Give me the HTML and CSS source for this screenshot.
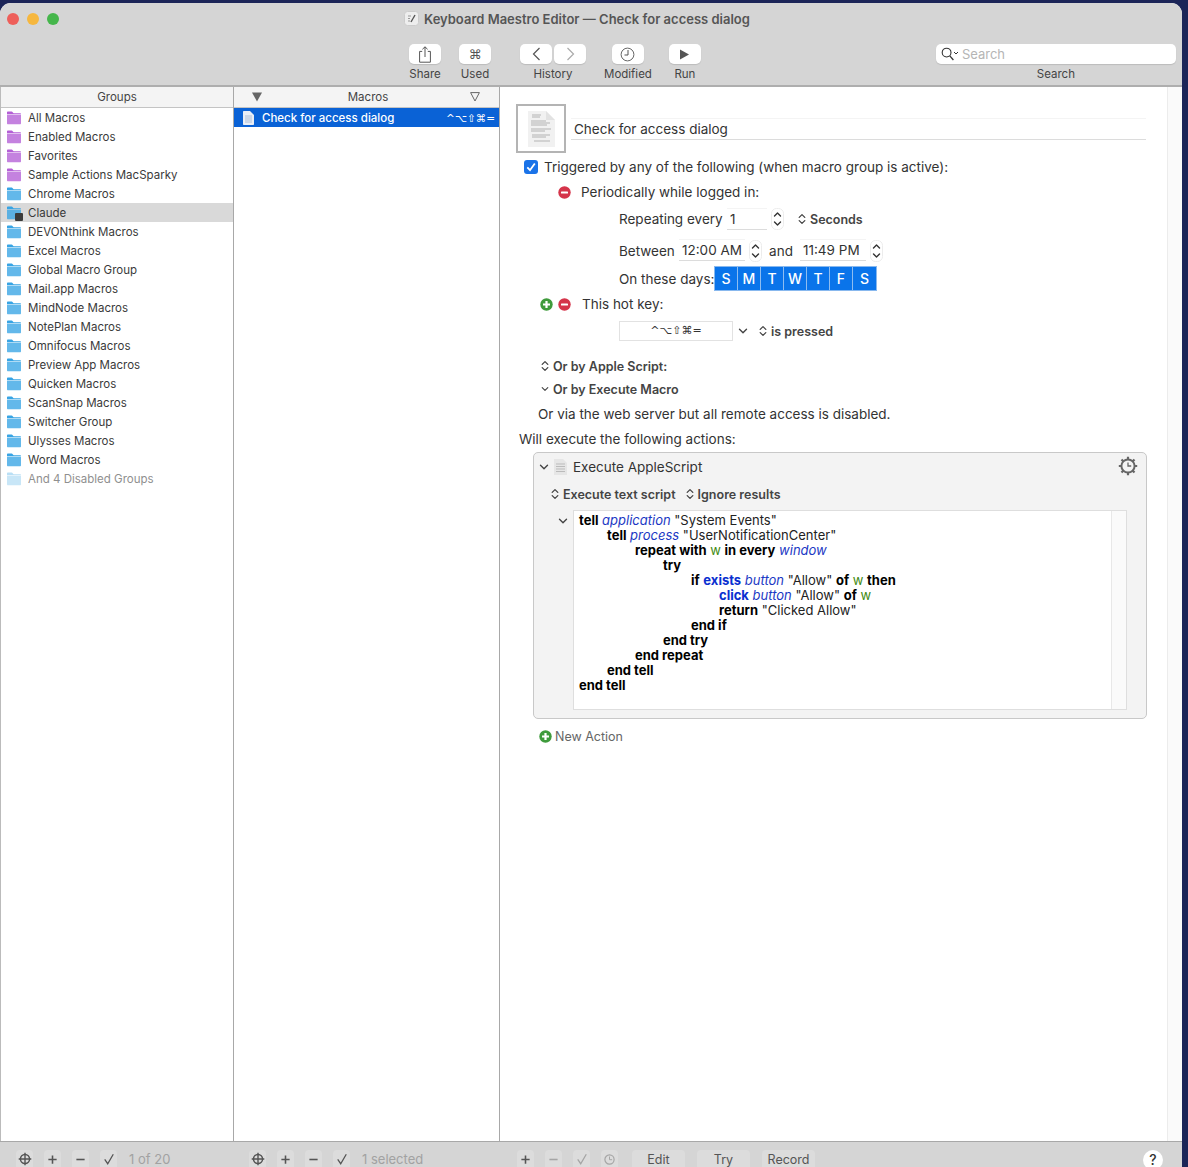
FILE: index.html
```html
<!DOCTYPE html>
<html lang="en">
<head>
    <meta charset="UTF-8">
    <meta name="viewport" content="width=device-width, initial-scale=1.0">
    <title>Keyboard Maestro Editor</title>
    <link rel="stylesheet" href="styles.css">
</head>
<body>
    <svg class="defs" width="0" height="0">
        <symbol id="folder" viewBox="0 0 16 14">
            <path d="M1 3V1.6C1 1 1.4.6 2 .6h3.6c.5 0 .8.2 1.1.6L7.6 2.2H14c.6 0 1 .4 1 1V3z" fill="currentColor"/>
            <path d="M1 3.4h14v8.9c0 .6-.4 1-1 1H2c-.6 0-1-.4-1-1z" fill="currentColor" opacity=".78"/>
        </symbol>
        <symbol id="updown" viewBox="0 0 8 12">
            <path d="M1.2 4.4 4 1.6l2.8 2.8M1.2 7.6 4 10.4l2.8-2.8" fill="none" stroke="currentColor" stroke-width="1.3" stroke-linecap="round" stroke-linejoin="round"/>
        </symbol>
        <symbol id="chev" viewBox="0 0 10 6">
            <path d="M1.5 1.2 5 4.7l3.5-3.5" fill="none" stroke="currentColor" stroke-width="1.4" stroke-linecap="round" stroke-linejoin="round"/>
        </symbol>
        <symbol id="minus" viewBox="0 0 13 13">
            <circle cx="6.5" cy="6.5" r="6.2" fill="#d5344a"/><rect x="3" y="5.4" width="7" height="2.2" rx=".6" fill="#fff"/>
        </symbol>
        <symbol id="plus" viewBox="0 0 13 13">
            <circle cx="6.5" cy="6.5" r="6.2" fill="#3f9b3c"/><path d="M3 5.4h2.4V3h2.2v2.4H10v2.2H7.6V10H5.4V7.6H3z" fill="#fff"/>
        </symbol>
        <symbol id="wheel" viewBox="0 0 16 16">
            <circle cx="8" cy="8" r="5.2" fill="none" stroke="currentColor" stroke-width="1.7"/>
            <path d="M8 .8v14.4M.8 8h14.4" stroke="currentColor" stroke-width="1.6"/>
        </symbol>
        <symbol id="fplus" viewBox="0 0 12 12"><path d="M6 1.5v9M1.5 6h9" stroke="currentColor" stroke-width="1.7"/></symbol>
        <symbol id="fminus" viewBox="0 0 12 12"><path d="M1.5 6h9" stroke="currentColor" stroke-width="1.7"/></symbol>
        <symbol id="fcheck" viewBox="0 0 14 14"><path d="M2 7.5 5.5 12.5 12 1.5" fill="none" stroke="currentColor" stroke-width="1.5"/></symbol>
        <symbol id="stepper" viewBox="0 0 13 22">
            <rect x=".5" y=".5" width="12" height="21" rx="5" fill="#fff" stroke="#ececec"/>
            <path d="M3.5 8 6.5 5l3 3M3.5 14l3 3 3-3" fill="none" stroke="#333" stroke-width="1.4" stroke-linecap="round" stroke-linejoin="round"/>
        </symbol>
    </svg>

    <div class="window">
        <div class="titlebar">
            <div class="lights"><span class="light red"></span><span class="light amber"></span><span class="light green"></span></div>
            <div class="title">
                <svg class="title-icon" width="15" height="15" viewBox="0 0 15 15"><rect x=".5" y=".5" width="14" height="14" rx="3" fill="#eee" stroke="#ccc"/><path d="M4 5h3M4 7.5h2M4 10h2" stroke="#999"/><path d="M7 11l4-7" stroke="#555" stroke-width="1.4"/></svg>
                Keyboard Maestro Editor — Check for access dialog
            </div>
        </div>

        <div class="toolbar">
            <div class="tool">
                <div class="tool-btn"><svg width="14" height="17" viewBox="0 0 14 17"><path d="M4.2 5.4H1.6v10.8h10.8V5.4H9.8M7 11V.9M4.4 3.3 7 .8l2.6 2.5" fill="none" stroke="#555" stroke-width="1"/></svg></div>
                <span class="tool-label">Share</span>
            </div>
            <div class="tool tool-used">
                <div class="tool-btn cmd">⌘</div>
                <span class="tool-label">Used</span>
            </div>
            <div class="tool tool-history">
                <div class="tool-pair">
                    <div class="tool-btn"><svg width="9" height="14" viewBox="0 0 9 14"><path d="M7.5 1 1.5 7l6 6" fill="none" stroke="#555" stroke-width="1.2"/></svg></div>
                    <div class="tool-btn"><svg width="9" height="14" viewBox="0 0 9 14"><path d="M1.5 1l6 6-6 6" fill="none" stroke="#aaa" stroke-width="1.2"/></svg></div>
                </div>
                <span class="tool-label">History</span>
            </div>
            <div class="tool tool-modified">
                <div class="tool-btn"><svg width="15" height="15" viewBox="0 0 15 15"><circle cx="7.5" cy="7.5" r="6.4" fill="none" stroke="#666" stroke-width="1"/><path d="M8 3v5H4.5" fill="none" stroke="#555" stroke-width="1"/></svg></div>
                <span class="tool-label">Modified</span>
            </div>
            <div class="tool tool-run">
                <div class="tool-btn"><svg width="11" height="11" viewBox="0 0 11 11"><path d="M1 .5 10 5.5 1 10.5z" fill="#555"/></svg></div>
                <span class="tool-label">Run</span>
            </div>
            <div class="tool tool-search">
                <div class="search-box">
                    <svg width="18" height="14" viewBox="0 0 18 14"><circle cx="5.6" cy="5.6" r="4.4" fill="none" stroke="#333" stroke-width="1.1"/><path d="M8.8 8.8 12.4 13" stroke="#333" stroke-width="1.3"/><path d="M13 5l2 2 2-2" fill="none" stroke="#333"/></svg>
                    <span>Search</span>
                </div>
                <span class="tool-label">Search</span>
            </div>
        </div>

        <div class="panes">
            <div class="pane groups">
                <div class="pane-head">Groups</div>
                <div class="group-row"><svg class="folder purple"><use href="#folder"/></svg>All Macros</div>
                <div class="group-row"><svg class="folder purple"><use href="#folder"/></svg>Enabled Macros</div>
                <div class="group-row"><svg class="folder purple"><use href="#folder"/></svg>Favorites</div>
                <div class="group-row"><svg class="folder purple"><use href="#folder"/></svg>Sample Actions MacSparky</div>
                <div class="group-row"><svg class="folder blue"><use href="#folder"/></svg>Chrome Macros</div>
                <div class="group-row selected"><span class="folder-wrap"><svg class="folder blue"><use href="#folder"/></svg><span class="badge"></span></span>Claude</div>
                <div class="group-row"><svg class="folder blue"><use href="#folder"/></svg>DEVONthink Macros</div>
                <div class="group-row"><svg class="folder blue"><use href="#folder"/></svg>Excel Macros</div>
                <div class="group-row"><svg class="folder blue"><use href="#folder"/></svg>Global Macro Group</div>
                <div class="group-row"><svg class="folder blue"><use href="#folder"/></svg>Mail.app Macros</div>
                <div class="group-row"><svg class="folder blue"><use href="#folder"/></svg>MindNode Macros</div>
                <div class="group-row"><svg class="folder blue"><use href="#folder"/></svg>NotePlan Macros</div>
                <div class="group-row"><svg class="folder blue"><use href="#folder"/></svg>Omnifocus Macros</div>
                <div class="group-row"><svg class="folder blue"><use href="#folder"/></svg>Preview App Macros</div>
                <div class="group-row"><svg class="folder blue"><use href="#folder"/></svg>Quicken Macros</div>
                <div class="group-row"><svg class="folder blue"><use href="#folder"/></svg>ScanSnap Macros</div>
                <div class="group-row"><svg class="folder blue"><use href="#folder"/></svg>Switcher Group</div>
                <div class="group-row"><svg class="folder blue"><use href="#folder"/></svg>Ulysses Macros</div>
                <div class="group-row"><svg class="folder blue"><use href="#folder"/></svg>Word Macros</div>
                <div class="group-row disabled"><svg class="folder pale"><use href="#folder"/></svg>And 4 Disabled Groups</div>
            </div>

            <div class="pane macros">
                <div class="pane-head macros-head">
                    <svg width="10" height="10" viewBox="0 0 10 10"><path d="M0 .5h10L5 9.5z" fill="#666"/></svg>
                    <span>Macros</span>
                    <svg width="10" height="10" viewBox="0 0 10 10"><path d="M.6 .6h8.8L5 9z" fill="none" stroke="#666"/></svg>
                </div>
                <div class="macro-row">
                    <svg width="11" height="14" viewBox="0 0 11 14"><path d="M0 1v12c0 .6.4 1 1 1h9c.6 0 1-.4 1-1V4L7 0H1C.4 0 0 .4 0 1z" fill="#e9eef6"/><path d="M2 5h7M2 7h7M2 9h7M2 11h7" stroke="#9fb3d1" stroke-width=".8"/></svg>
                    <span class="macro-name">Check for access dialog</span>
                    <span class="macro-key">^⌥⇧⌘=</span>
                </div>
            </div>

            <div class="editor">
                <div class="editor-body">
                    <div class="macro-head">
                        <div class="icon-well">
                            <svg width="28" height="36" viewBox="0 0 28 36"><path d="M1 0h18l9 9v27H1z" fill="#f1f1f1"/><path d="M19 0l9 9h-9z" fill="#e2e2e2"/><path d="M5 4h9M5 6h8M4 10h15M4 12h19M4 14h16M4 18h20M4 20h14M5 24h18M5 26h14M7 30h16" stroke="#b3b3b3" stroke-width="1.1"/></svg>
                        </div>
                        <div class="name-field">Check for access dialog</div>
                    </div>

                    <div class="row trig-row">
                        <span class="checkbox"><svg width="10" height="10" viewBox="0 0 10 10"><path d="M1.3 5.4 4 8.2 8.8 1.4" fill="none" stroke="#fff" stroke-width="1.8"/></svg></span>
                        <span>Triggered by any of the following (when macro group is active):</span>
                    </div>
                    <div class="row period-row">
                        <svg class="round"><use href="#minus"/></svg>
                        <span>Periodically while logged in:</span>
                    </div>
                    <div class="row repeat-row">
                        <span class="repeat-label">Repeating every</span>
                        <span class="field field-num">1</span>
                        <svg class="step"><use href="#stepper"/></svg>
                        <span class="popup seconds"><svg class="ud"><use href="#updown"/></svg>Seconds</span>
                    </div>
                    <div class="row between-row">
                        <span class="between-label">Between</span>
                        <span class="field field-time">12:00 AM</span>
                        <svg class="step"><use href="#stepper"/></svg>
                        <span class="and">and</span>
                        <span class="field field-time">11:49 PM</span>
                        <svg class="step"><use href="#stepper"/></svg>
                    </div>
                    <div class="row days-row">
                        <span class="days-label">On these days:</span>
                        <div class="days">
                            <span>S</span><span>M</span><span>T</span><span>W</span><span>T</span><span>F</span><span>S</span>
                        </div>
                    </div>
                    <div class="row hotkey-row">
                        <svg class="round"><use href="#plus"/></svg>
                        <svg class="round"><use href="#minus"/></svg>
                        <span>This hot key:</span>
                    </div>
                    <div class="row key-row">
                        <span class="key-field">^⌥⇧⌘=</span>
                        <svg class="chev"><use href="#chev"/></svg>
                        <span class="popup pressed"><svg class="ud"><use href="#updown"/></svg>is pressed</span>
                    </div>
                    <div class="row or-row or-apple"><svg class="ud"><use href="#updown"/></svg><b>Or by Apple Script:</b></div>
                    <div class="row or-row or-exec"><svg class="chev"><use href="#chev"/></svg><b>Or by Execute Macro</b></div>
                    <div class="row web-row">Or via the web server but all remote access is disabled.</div>
                    <div class="row will-row">Will execute the following actions:</div>

                    <div class="action">
                        <div class="action-head">
                            <svg class="chev"><use href="#chev"/></svg>
                            <svg class="action-doc" width="13" height="16" viewBox="0 0 13 16"><path d="M0 0h9l4 4v12H0z" fill="#e6e6e6"/><path d="M2 5h9M2 7.5h9M2 10h9M2 12.5h9" stroke="#bbb"/></svg>
                            <span class="action-name">Execute AppleScript</span>
                            <svg class="gear" width="20" height="20" viewBox="0 0 20 20">
                                <circle cx="10" cy="10" r="6.6" fill="none" stroke="#666" stroke-width="2"/>
                                <path d="M10 .8v3M10 16.2v3M.8 10h3M16.2 10h3M3.5 3.5l2.1 2.1M14.4 14.4l2.1 2.1M16.5 3.5l-2.1 2.1M5.6 14.4l-2.1 2.1" stroke="#666" stroke-width="2.2"/>
                                <path d="M10 6.4V10h3.2" fill="none" stroke="#666" stroke-width="1.3"/>
                            </svg>
                        </div>
                        <div class="action-opts">
                            <span class="popup"><svg class="ud"><use href="#updown"/></svg>Execute text script</span>
                            <span class="popup"><svg class="ud"><use href="#updown"/></svg>Ignore results</span>
                        </div>
                        <div class="script-wrap">
                            <svg class="chev"><use href="#chev"/></svg>
                            <div class="script">
                                <div class="code">
                                    <div><b>tell</b> <i>application</i> "System Events"</div>
                                    <div class="i1"><b>tell</b> <i>process</i> "UserNotificationCenter"</div>
                                    <div class="i2"><b>repeat with</b> <em>w</em> <b>in every</b> <i>window</i></div>
                                    <div class="i3"><b>try</b></div>
                                    <div class="i4"><b>if</b> <strong>exists</strong> <i>button</i> "Allow" <b>of</b> <em>w</em> <b>then</b></div>
                                    <div class="i5"><strong>click</strong> <i>button</i> "Allow" <b>of</b> <em>w</em></div>
                                    <div class="i5"><b>return</b> "Clicked Allow"</div>
                                    <div class="i4"><b>end if</b></div>
                                    <div class="i3"><b>end try</b></div>
                                    <div class="i2"><b>end repeat</b></div>
                                    <div class="i1"><b>end tell</b></div>
                                    <div><b>end tell</b></div>
                                </div>
                                <div class="script-bar"></div>
                            </div>
                        </div>
                    </div>

                    <div class="row new-action">
                        <svg class="round"><use href="#plus"/></svg>
                        <span>New Action</span>
                    </div>
                </div>
                <div class="editor-scroll"></div>
            </div>
        </div>

        <div class="footer">
            <div class="foot-group foot-groups">
                <span class="fbtn"><svg width="14" height="14"><use href="#wheel"/></svg></span>
                <span class="fbtn"><svg width="11" height="11"><use href="#fplus"/></svg></span>
                <span class="fbtn"><svg width="11" height="11"><use href="#fminus"/></svg></span>
                <span class="fbtn"><svg width="12" height="12"><use href="#fcheck"/></svg></span>
                <span class="foot-text">1 of 20</span>
            </div>
            <div class="foot-group foot-macros">
                <span class="fbtn"><svg width="14" height="14"><use href="#wheel"/></svg></span>
                <span class="fbtn"><svg width="11" height="11"><use href="#fplus"/></svg></span>
                <span class="fbtn"><svg width="11" height="11"><use href="#fminus"/></svg></span>
                <span class="fbtn"><svg width="12" height="12"><use href="#fcheck"/></svg></span>
                <span class="foot-text">1 selected</span>
            </div>
            <div class="foot-group foot-editor">
                <span class="fbtn"><svg width="11" height="11"><use href="#fplus"/></svg></span>
                <span class="fbtn dim"><svg width="11" height="11"><use href="#fminus"/></svg></span>
                <span class="fbtn dim"><svg width="12" height="12"><use href="#fcheck"/></svg></span>
                <span class="fbtn dim"><svg width="11" height="11" viewBox="0 0 11 11"><circle cx="5.5" cy="5.5" r="4.6" fill="none" stroke="currentColor" stroke-width="1.2"/><path d="M5.5 2.5v3.2h2.6" fill="none" stroke="currentColor"/></svg></span>
                <span class="fbtn wide first-wide">Edit</span>
                <span class="fbtn wide">Try</span>
                <span class="fbtn wide">Record</span>
                <span class="help">?</span>
            </div>
        </div>
    </div>
</body>
</html>
```

FILE: styles.css
```css
html, body {
    height: 100%;
    margin: 0;
    overflow: hidden;
}
body {
    background: #1c2558;
    font-family: Inter, "Noto Sans", "Liberation Sans", "DejaVu Sans", sans-serif;
    color: #333;
    -webkit-font-smoothing: antialiased;
}
.defs { position: absolute; }
.window {
    width: 1182px;
    height: 1164px;
    margin-top: 3px;
    background: #fff;
    border-radius: 11px 11px 0 0;
    overflow: hidden;
    display: flex;
    flex-direction: column;
}

/* title bar */
.titlebar {
    height: 35px;
    flex: none;
    display: flex;
    align-items: center;
    background: #d5d5d5;
    position: relative;
    padding: 0 0 6px 7px;
    box-sizing: border-box;
    padding-top: 2px;
}
.lights { display: flex; gap: 8px; }
.light { width: 12px; height: 12px; border-radius: 50%; }
.red { background: #ee5f5a; }
.amber { background: #f6b73e; }
.green { background: #45b64b; }
.title {
    margin-left: 345px;
    display: flex;
    align-items: center;
    gap: 5px;
    font-size: 13px;
    font-weight: 600;
    color: #555;
    white-space: nowrap;
}

/* toolbar */
.toolbar {
    height: 47px;
    flex: none;
    display: flex;
    padding-left: 409px;
    background: #d5d5d5;
    border-bottom: 2px solid #aeaeae;
    box-sizing: content-box;
    margin-bottom: 0;
}
.tool {
    display: flex;
    flex-direction: column;
    align-items: center;
    gap: 3px;
    padding-top: 6px;
}
.tool-btn {
    width: 32px;
    height: 20px;
    display: flex;
    align-items: center;
    justify-content: center;
    background: #fff;
    border-radius: 5px;
    box-shadow: 0 1px 1px rgba(0, 0, 0, .12);
}
.cmd { font-family: "DejaVu Sans", sans-serif; font-size: 13px; color: #555; }
.tool-label { font-size: 11.5px; line-height: 15px; color: #444; white-space: nowrap; }
.tool-pair { display: flex; gap: 2px; }
.tool-used { margin-left: 18px; }
.tool-history { margin-left: 29px; }
.tool-modified { margin-left: 18px; }
.tool-run { margin-left: 17px; }
.tool-search { margin-left: 235px; }
.search-box {
    width: 240px;
    height: 20px;
    display: flex;
    align-items: center;
    gap: 3px;
    box-sizing: border-box;
    padding-left: 5px;
    background: #fff;
    border-radius: 5px;
    box-shadow: 0 1px 1px rgba(0, 0, 0, .12);
    font-size: 13px;
    color: #b5b5b5;
}

/* panes */
.panes {
    flex: 1;
    min-height: 0;
    display: flex;
}
.pane {
    flex: none;
    box-sizing: border-box;
    border-right: 1px solid #a8a8a8;
    font-size: 11.5px;
}
.groups { width: 234px; border-left: 1px solid #bbb; }
.macros { width: 266px; }
.pane-head {
    height: 21px;
    box-sizing: border-box;
    display: flex;
    align-items: center;
    justify-content: center;
    background: #f4f4f4;
    border-bottom: 1px solid #c4c4c4;
    color: #444;
}
.group-row {
    height: 19px;
    display: flex;
    align-items: center;
    gap: 6px;
    padding-left: 5px;
    color: #3a3a3a;
    white-space: nowrap;
}
.selected { background: #d9d9d9; }
.disabled { color: #8f8f8f; }
.folder { width: 16px; height: 14px; flex: none; }
.purple { color: #b45fd6; }
.blue { color: #37a4e4; }
.pale { color: #b9dff5; }
.folder-wrap { position: relative; display: flex; }
.badge {
    position: absolute;
    right: -1px;
    bottom: -1px;
    width: 8px;
    height: 8px;
    background: #3a3a3a;
    border-radius: 1px;
}
.macros-head { justify-content: space-between; padding: 0 19px 0 18px; }
.macros-head span { margin-left: 4px; }
.macro-row {
    height: 19px;
    display: flex;
    align-items: center;
    padding: 0 4px 0 9px;
    background: #0a62d6;
    color: #fff;
}
.macro-name { margin-left: 8px; font-weight: 500; }
.macro-key { margin-left: auto; font-family: "DejaVu Sans", sans-serif; font-size: 10.5px; }

/* editor */
.editor {
    flex: 1;
    display: flex;
    min-width: 0;
    font-size: 13.5px;
    color: #333;
}
.editor-body {
    flex: 1;
    min-width: 0;
    padding: 17px 0 0 16px;
}
.editor-scroll {
    width: 14px;
    flex: none;
    background: #fafafa;
    border-left: 1px solid #ececec;
}
.macro-head { display: flex; align-items: flex-end; }
.icon-well {
    width: 50px;
    height: 49px;
    box-sizing: border-box;
    display: flex;
    align-items: center;
    justify-content: center;
    border: 2px solid #b4b4b4;
}
.name-field {
    width: 575px;
    height: 21px;
    margin: 0 0 13px 5px;
    padding-left: 3px;
    box-sizing: border-box;
    line-height: 20px;
    border-bottom: 1px solid #dcdcdc;
    box-shadow: 0 -1px 0 #f4f4f4;
}
.row { display: flex; align-items: center; white-space: nowrap; }
.trig-row { margin: 4px 0 0 8px; height: 20px; gap: 6px; }
.checkbox {
    width: 14px;
    height: 14px;
    border-radius: 3px;
    background: #1a73e8;
    display: flex;
    align-items: center;
    justify-content: center;
}
.round { width: 13px; height: 13px; flex: none; }
.period-row { margin: 5px 0 0 42px; height: 20px; gap: 10px; }
.repeat-row { margin: 6px 0 0 103px; height: 22px; }
.repeat-label { width: 108px; }
.field {
    height: 21px;
    box-sizing: border-box;
    padding-left: 3px;
    line-height: 21px;
    border-bottom: 1px solid #dcdcdc;
    box-shadow: 0 -1px 0 #f4f4f4;
}
.field-num { width: 40px; }
.field-time { width: 66px; }
.step { width: 13px; height: 22px; margin-left: 4px; flex: none; }
.popup { display: inline-flex; align-items: center; gap: 4px; font-size: 12.5px; font-weight: 600; color: #444; }
.ud { width: 8px; height: 12px; flex: none; }
.chev { width: 10px; height: 6px; flex: none; color: #444; }
.seconds { margin-left: 14px; }
.between-row { margin: 9px 0 0 103px; height: 23px; }
.between-label { width: 60px; }
.and { width: 38px; text-align: center; }
.days-row { margin: 5px 0 0 103px; height: 23px; }
.days-label { width: 96px; }
.days {
    display: flex;
    height: 23px;
    background: #0a74ea;
    outline: 1px solid #88b8ee;
}
.days span {
    width: 23px;
    text-align: center;
    line-height: 23px;
    color: #fff;
    font-size: 14px;
    font-weight: 500;
    box-sizing: border-box;
    border-right: 1px solid #8fbdf0;
}
.days span:last-child { border-right: 0; }
.hotkey-row { margin: 4px 0 0 24px; height: 20px; gap: 5px; }
.hotkey-row span { margin-left: 6px; }
.key-row { margin: 7px 0 0 103px; height: 20px; }
.key-field {
    width: 114px;
    height: 20px;
    box-sizing: border-box;
    line-height: 18px;
    text-align: center;
    border: 1px solid #e2e2e2;
    font-family: "DejaVu Sans", sans-serif;
    font-size: 11px;
}
.key-row .chev { margin-left: 5px; }
.pressed { margin-left: 11px; }
.or-row { margin-left: 25px; height: 18px; gap: 4px; font-size: 12.5px; color: #444; }
.or-row b { font-weight: 600; }
.or-apple { margin-top: 16px; }
.or-exec { margin-top: 5px; }
.or-exec .chev { width: 8px; }
.web-row { margin: 6px 0 0 22px; height: 20px; }
.will-row { margin: 5px 0 0 3px; height: 20px; }

/* action box */
.action {
    width: 614px;
    height: 267px;
    margin: 3px 0 0 17px;
    box-sizing: border-box;
    background: #f3f3f3;
    border: 1px solid #c8c8c8;
    border-radius: 5px;
}
.action-head { height: 27px; display: flex; align-items: center; padding: 0 8px 0 5px; }
.action-doc { margin-left: 5px; }
.action-name { margin-left: 6px; }
.gear { margin-left: auto; margin-top: -2px; }
.action-opts { margin: 5px 0 0 17px; display: flex; gap: 10px; height: 18px; }
.script-wrap { display: flex; margin-top: 7px; }
.script-wrap .chev { margin: 8px 0 0 24px; }
.script {
    width: 554px;
    height: 200px;
    margin-left: 5px;
    box-sizing: border-box;
    display: flex;
    justify-content: space-between;
    background: #fff;
    border: 1px solid #dedede;
}
.code { padding: 2px 0 0 5px; font-size: 13px; line-height: 15px; color: #222; white-space: nowrap; }
.code b, .code strong { font-weight: 700; }
.code b { color: #000; }
.code strong { color: #0a2fd0; }
.code i { color: #1c39c4; }
.code em { font-style: normal; color: #3f8a10; }
.i1 { padding-left: 28px; }
.i2 { padding-left: 56px; }
.i3 { padding-left: 84px; }
.i4 { padding-left: 112px; }
.i5 { padding-left: 140px; }
.script-bar { width: 14px; background: #fafafa; border-left: 1px solid #e8e8e8; }
.new-action { margin: 10px 0 0 23px; height: 14px; gap: 3px; font-size: 12.5px; color: #666; }

/* footer */
.footer {
    height: 26px;
    flex: none;
    box-sizing: border-box;
    display: flex;
    background: #d5d5d5;
    border-top: 1px solid #a8a8a8;
    overflow: hidden;
}
.foot-group { display: flex; gap: 11px; padding-top: 8px; flex: none; box-sizing: border-box; }
.foot-groups { width: 232px; padding-left: 16px; }
.foot-macros { width: 268px; padding-left: 17px; }
.foot-editor { flex: 1; padding-left: 17px; }
.fbtn {
    width: 17px;
    height: 22px;
    flex: none;
    display: flex;
    align-items: center;
    justify-content: center;
    background: #dcdcdc;
    border-radius: 4px;
    color: #555;
}
.fbtn svg { margin-bottom: 4px; }
.fbtn.dim { color: #a5a5a5; }
.fbtn.wide {
    width: 53px;
    font-size: 12.5px;
    color: #555;
    padding-bottom: 4px;
    box-sizing: border-box;
    margin-left: 1px;
}
.first-wide { margin-left: 3px !important; }
.foot-text { margin-left: 1px; font-size: 13px; line-height: 18px; color: #a2a2a2; }
.help {
    width: 20px;
    height: 20px;
    margin-left: auto;
    margin-right: 19px;
    border-radius: 50%;
    background: #fff;
    text-align: center;
    font-size: 14px;
    font-weight: 500;
    line-height: 20px;
    color: #333;
}
```
